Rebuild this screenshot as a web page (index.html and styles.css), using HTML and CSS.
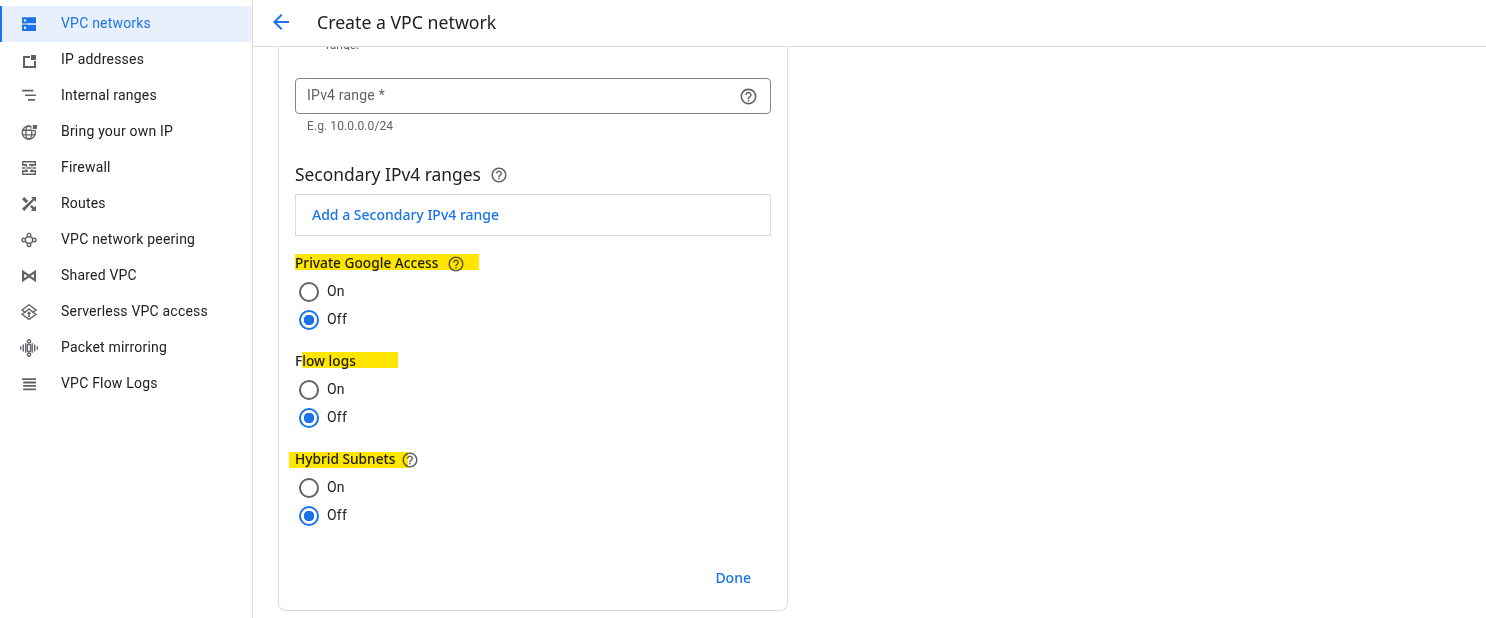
FILE: index.html
```html
<!DOCTYPE html>
<html lang="en">
<head>
<meta charset="utf-8">
<title>Create a VPC network</title>
<link rel="stylesheet" href="styles.css">
</head>
<body>
<svg class="defs" width="0" height="0" aria-hidden="true">
  <symbol id="help" viewBox="0 0 24 24"><path d="M11 18h2v-2h-2v2zm1-16C6.48 2 2 6.48 2 12s4.48 10 10 10 10-4.48 10-10S17.52 2 12 2zm0 18c-4.41 0-8-3.59-8-8s3.59-8 8-8 8 3.59 8 8-3.59 8-8 8zm0-14c-2.21 0-4 1.79-4 4h2c0-1.1.9-2 2-2s2 .9 2 2c0 2-3 1.75-3 5h2c0-2.25 3-2.5 3-5 0-2.21-1.79-4-4-4z"/></symbol>
</svg>
<div class="app">
  <nav class="sidebar">
    <a class="nav-item active">
      <svg class="nav-icon" viewBox="0 0 18 18"><path d="M2 2.3h14v6.2H2zM2 9.6h14V16H2z"/><circle class="cut-out" cx="5" cy="5.4" r="1.2"/><circle class="cut-out" cx="5" cy="12.8" r="1.2"/><path class="cut-out" d="M7.5 8.5H16v1.1H7.5z"/></svg>
      <span>VPC networks</span>
    </a>
    <a class="nav-item">
      <svg class="nav-icon" viewBox="0 0 18 18"><path d="M3 5h7v2H5v8h9v-5h2v7H3z"/><path d="M11 4h5v5h-5z"/></svg>
      <span>IP addresses</span>
    </a>
    <a class="nav-item">
      <svg class="nav-icon" viewBox="0 0 18 18"><path d="M2 2.8h11.5v1.7H2zM5 7.4h11v1.7H5zM8 12h7v1.7H8z"/></svg>
      <span>Internal ranges</span>
    </a>
    <a class="nav-item">
      <svg class="nav-icon" viewBox="0 0 18 18"><g class="line thick"><circle cx="8.8" cy="9.6" r="6.6"/><ellipse cx="8.8" cy="9.6" rx="3" ry="6.6"/><path d="M2.4 7.3h12.8M2.4 11.9h12.8"/></g><path class="knock" d="M11.5 1h6v6h-6z"/><path d="M12.8 2h4.2v4h-4.2z"/></svg>
      <span>Bring your own IP</span>
    </a>
    <a class="nav-item">
      <svg class="nav-icon" viewBox="0 0 18 18"><path d="M2 2h14v1.6H2zM2 14.4h14V16H2zM2 5.1h5v1.6H2zM9 5.1h7v1.6H9zM2 8.2h3v1.6H2zM7 8.2h4v1.6H7zM13 8.2h3v1.6h-3zM2 11.3h6v1.6H2zM10 11.3h6v1.6h-6zM2 2h1.4v3.2H2zM14.6 2H16v3.2h-1.4zM2 11.3h1.4v3.2H2zM14.6 11.3H16v3.2h-1.4zM5.6 6.4h1.2v2H5.6zM11.4 6.4h1.2v2h-1.2zM5.6 9.6h1.2v2H5.6zM11.4 9.6h1.2v2h-1.2z"/></svg>
      <span>Firewall</span>
    </a>
    <a class="nav-item">
      <svg class="nav-icon" viewBox="0 0 18 18"><path d="M2 4.2 4.2 2l4 4L6 8.2zM11 2h5v5l-1.8-1.8L4.2 16 2 13.8 12.8 3.8zM10 11.8l1.8-1.8 2.4 2.2L16 10.8V16h-5.2l1.6-1.8z"/></svg>
      <span>Routes</span>
    </a>
    <a class="nav-item">
      <svg class="nav-icon" viewBox="0 0 18 18"><g class="line thick"><path d="M7.8 5.4 5 7.8M10.2 5.4 13 7.8M5 10.2l2.8 2.4M13 10.2l-2.8 2.4"/><circle cx="9" cy="4.2" r="1.8"/><circle cx="3.8" cy="9" r="1.8"/><circle cx="14.2" cy="9" r="1.8"/><circle cx="9" cy="13.8" r="1.8"/></g></svg>
      <span>VPC network peering</span>
    </a>
    <a class="nav-item">
      <svg class="nav-icon" viewBox="0 0 18 18"><path fill-rule="evenodd" d="M2 2.8 9 7.4l7-4.6v12.4l-7-4.6-7 4.6zM4.2 6.8v4.4L7.4 9zM13.8 6.8 10.6 9l3.2 2.2z"/></svg>
      <span>Shared VPC</span>
    </a>
    <a class="nav-item">
      <svg class="nav-icon" viewBox="0 0 18 18"><g class="line thick"><path d="M9 1.8 16 7l-3 2.2 3 2.1-7 5-7-5 3-2.1L2 7z"/><path d="M5 9.2 9 6l4 3.2"/></g><path d="M9 8.2l2.4 2.6H9.8V14H8.2v-3.2H6.6z"/></svg>
      <span>Serverless VPC access</span>
    </a>
    <a class="nav-item">
      <svg class="nav-icon" viewBox="0 0 18 18"><g class="line thick"><circle cx="9" cy="2.4" r="1.6"/><circle cx="9" cy="15.6" r="1.6"/><rect x="7.4" y="5.4" width="3.2" height="7.2" rx="1"/></g><path d="M0 7.2h1.4v3.6H0zM2.6 5.4H4v7.2H2.6zM5.1 4.2h1.4v9.6H5.1zM11.5 4.2h1.4v9.6h-1.4zM14 5.4h1.4v7.2H14zM16.6 7.2H18v3.6h-1.4z"/></svg>
      <span>Packet mirroring</span>
    </a>
    <a class="nav-item">
      <svg class="nav-icon" viewBox="0 0 18 18"><path d="M2 3.2h14V5H2zM3.2 6.6H16v1.8H3.2zM3.2 10H16v1.8H3.2zM3.2 13.4H16v1.8H3.2z"/></svg>
      <span>VPC Flow Logs</span>
    </a>
  </nav>

  <main class="main">
    <header class="topbar">
      <svg class="back" viewBox="0 0 24 24"><path d="M20 11H7.83l5.59-5.59L12 4l-8 8 8 8 1.41-1.41L7.83 13H20v-2z"/></svg>
      <h1 class="title">Create a VPC network</h1>
    </header>
    <div class="scroll">
      <section class="card">
        <div class="clipped-line"><span>range.</span></div>

        <div class="input">
          <span class="placeholder">IPv4 range *</span>
          <svg class="help help-lg"><use href="#help"/></svg>
        </div>
        <p class="hint">E.g. 10.0.0.0/24</p>

        <h2 class="section-title">Secondary IPv4 ranges <svg class="help"><use href="#help"/></svg></h2>
        <div class="add-box"><a class="add-link">Add a Secondary IPv4 range</a></div>

        <div class="group first">
          <h3 class="group-title">Private Google Access <svg class="help help-gap"><use href="#help"/></svg><i class="marker marker-private"></i></h3>
          <label class="radio"><i class="dot"></i>On</label>
          <label class="radio"><i class="dot checked"></i>Off</label>
        </div>
        <div class="group">
          <h3 class="group-title">Flow logs<i class="marker marker-flow"></i></h3>
          <label class="radio"><i class="dot"></i>On</label>
          <label class="radio"><i class="dot checked"></i>Off</label>
        </div>
        <div class="group">
          <h3 class="group-title">Hybrid Subnets <svg class="help help-gap-sm"><use href="#help"/></svg><i class="marker marker-hybrid"></i></h3>
          <label class="radio"><i class="dot"></i>On</label>
          <label class="radio"><i class="dot checked"></i>Off</label>
        </div>

        <div class="actions"><a class="done">Done</a></div>
      </section>
    </div>
  </main>
</div>
</body>
</html>
```
FILE: styles.css
```css
* { box-sizing: border-box; }
html, body { margin: 0; height: 100%; }
body { background: #fff; color: #202124; font-family: Roboto, "Liberation Sans", sans-serif; font-size: 14px; overflow: hidden; }
.defs { position: absolute; }
.app { display: flex; height: 618px; overflow: hidden; }

.sidebar { width: 253px; flex: none; padding-top: 6px; border-right: 1px solid #dadce0; }
.nav-item { display: flex; align-items: center; height: 36px; padding-left: 20px; color: #202124; letter-spacing: .2px; }
.nav-item span { margin-left: 23px; padding-bottom: 2px; }
.nav-item.active { background: #e8f0fe; color: #1a73e8; border-left: 2px solid #1a73e8; padding-left: 18px; }
.nav-icon { width: 18px; height: 18px; flex: none; fill: #5f6368; }
.active .nav-icon { fill: #1a73e8; }
.cut-out { fill: #e8f0fe; }
.knock { fill: #fff; }
.line { fill: none; stroke: #5f6368; stroke-width: 1.2; }
.line.thick { stroke-width: 1.4; }

.main { flex: 1; min-width: 0; display: flex; flex-direction: column; }
.topbar { height: 47px; flex: none; display: flex; align-items: center; padding: 0 0 2px 16px; border-bottom: 1px solid #dadce0; }
.back { width: 24px; height: 24px; fill: #1a73e8; margin-right: 24px; }
.title { margin: 0; font-family: "Noto Sans", Roboto, sans-serif; font-size: 17.7px; font-weight: 400; color: #202124; }

.scroll { flex: 1; padding-left: 25px; }
.card { width: 510px; height: 564px; padding: 0 16px; border: 1px solid #dadce0; border-top: 0; border-radius: 0 0 8px 8px; }
.clipped-line { height: 3px; overflow: hidden; display: flex; align-items: flex-end; padding-left: 31px; font-size: 12px; color: #5f6368; line-height: 14px; }
.clipped-line span { margin-bottom: -2px; }

.input { height: 36px; margin-top: 28px; display: flex; align-items: center; justify-content: space-between; padding: 0 12px 0 11px; border: 1px solid #80868b; border-radius: 4px; }
.placeholder { color: #5f6368; letter-spacing: .2px; padding-bottom: 2px; }
.help { width: 18px; height: 18px; fill: #5f6368; vertical-align: middle; flex: none; }
.help-lg { width: 19px; height: 19px; }
.hint { margin: 4px 0 0 12px; font-size: 12px; line-height: 16px; color: #5f6368; letter-spacing: .1px; }

.section-title { margin: 30px 0 10px; font-family: "Noto Sans", Roboto, sans-serif; font-size: 17.4px; font-weight: 400; line-height: 20px; color: #202124; }
.section-title .help { margin-left: 5px; margin-top: -2px; }
.add-box { height: 42px; display: flex; align-items: center; padding: 0 0 2px 16px; border: 1px solid #dadce0; }
.add-link { font-family: "Noto Sans", Roboto, sans-serif; color: #1a73e8; font-weight: 500; }

.group { margin-top: 18px; }
.group.first { margin-top: 17px; }
.group-title { position: relative; margin: 0 0 4px; font-family: "Noto Sans", Roboto, sans-serif; font-size: 13.7px; font-weight: 500; line-height: 20px; color: #202124; }
.group-title .help { margin-top: -2px; }
.help-gap { margin-left: 5px; }
.help-gap-sm { margin-left: 2px; }
.marker { position: absolute; background: #ffe600; mix-blend-mode: multiply; }
.marker-private { left: 0; top: 1px; width: 184px; height: 16px; }
.marker-flow { left: 7px; top: 1px; width: 96px; height: 16px; }
.marker-hybrid { left: -6px; top: 3px; width: 119px; height: 16px; }

.radio { display: flex; align-items: center; height: 28px; padding-left: 4px; letter-spacing: .2px; color: #202124; }
.dot { width: 20px; height: 20px; margin-right: 8px; border: 2px solid #5f6368; border-radius: 50%; position: relative; top: 1px; }
.dot.checked { border-color: #1a73e8; background: radial-gradient(circle, #1a73e8 0 5px, #fff 5.5px); }

.actions { display: flex; justify-content: flex-end; margin-top: 31px; padding-right: 20px; }
.done { font-family: "Noto Sans", Roboto, sans-serif; height: 36px; line-height: 36px; color: #1a73e8; font-weight: 500; }
```
